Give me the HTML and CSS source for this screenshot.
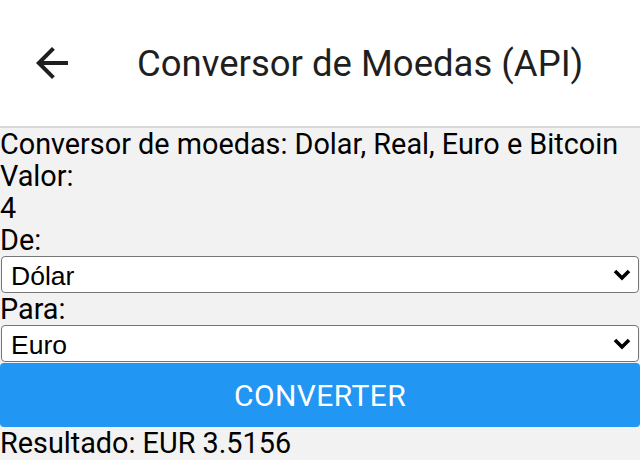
FILE: index.html
```html
<!DOCTYPE html>
<html lang="pt">
<head>
<meta charset="utf-8">
<title>Conversor de Moedas (API)</title>
<link rel="stylesheet" href="styles.css">
</head>
<body>
<header class="appbar">
  <button class="back" aria-label="Voltar">
    <svg viewBox="0 0 24 24" width="48" height="48"><path d="M20 11H7.83l5.59-5.59L12 4l-8 8 8 8 1.41-1.41L7.83 13H20v-2z" fill="#1f1f1f"/></svg>
  </button>
  <h1 class="title">Conversor de Moedas (API)</h1>
</header>
<main class="content">
  <p class="line">Conversor de moedas: Dolar, Real, Euro e Bitcoin</p>
  <p class="line">Valor:</p>
  <p class="line">4</p>
  <p class="line">De:</p>
  <select class="picker">
    <option>Dólar</option>
    <option>Real</option>
    <option>Euro</option>
    <option>Bitcoin</option>
  </select>
  <p class="line">Para:</p>
  <select class="picker">
    <option>Euro</option>
    <option>Dólar</option>
    <option>Real</option>
    <option>Bitcoin</option>
  </select>
  <button class="convert">CONVERTER</button>
  <p class="line">Resultado: EUR 3.5156</p>
</main>
</body>
</html>
```
FILE: styles.css
```css
html, body {
  margin: 0;
  padding: 0;
  height: 100%;
}
body {
  background: #f2f2f2;
  font-family: Roboto, "Liberation Sans", sans-serif;
  color: #000;
  display: flex;
  flex-direction: column;
}
.appbar {
  height: 126px;
  background: #fff;
  border-bottom: 2px solid #d8d8d8;
  display: flex;
  align-items: center;
  flex-shrink: 0;
}
.back {
  border: 0;
  background: none;
  padding: 0;
  margin-left: 28px;
  width: 48px;
  height: 48px;
  display: flex;
}
.title {
  margin: 0 0 0 61px;
  font-weight: 400;
  font-size: 36.5px;
  color: #1f1f1f;
}
.content {
  display: flex;
  flex-direction: column;
}
.line {
  margin: 0;
  font-size: 28.8px;
  line-height: 32px;
  height: 32px;
  white-space: nowrap;
}
.picker {
  -webkit-appearance: none;
  appearance: none;
  margin: 0 1px;
  height: 37px;
  font-family: "Liberation Sans", Arial, sans-serif;
  font-size: 26.5px;
  padding: 2px 40px 0 9px;
  border: 1px solid #767676;
  border-radius: 4px;
  background-color: #fff;
  background-image: url("data:image/svg+xml,%3Csvg xmlns='http://www.w3.org/2000/svg' width='18' height='12' viewBox='0 0 18 12'%3E%3Cpath d='M2 2l7 7 7-7' fill='none' stroke='%23000' stroke-width='3.6'/%3E%3C/svg%3E");
  background-repeat: no-repeat;
  background-position: right 7px center;
  color: #000;
}
.convert {
  margin-top: 1px;
  height: 64px;
  border: 0;
  border-radius: 4px;
  background: #2196f3;
  color: #fff;
  font-family: Roboto, sans-serif;
  font-size: 30px;
  letter-spacing: 0.4px;
}
```
